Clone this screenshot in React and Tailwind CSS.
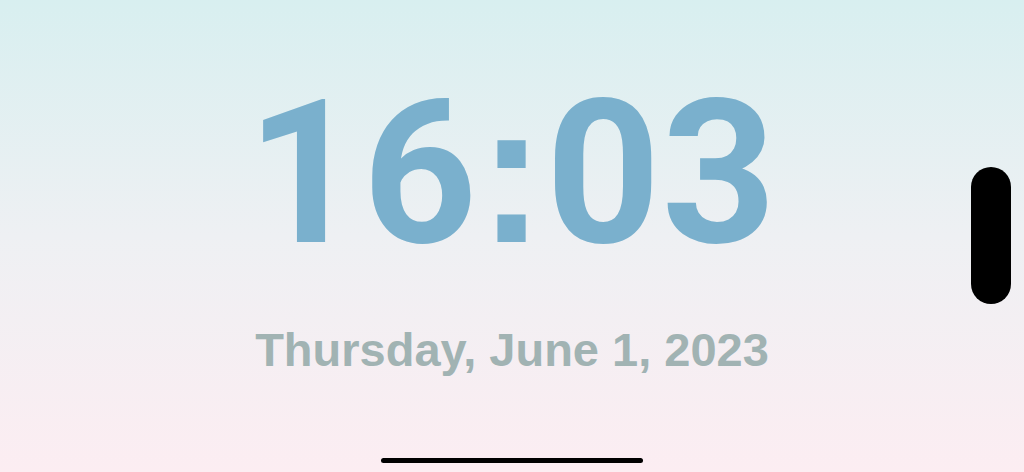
import React from 'react'

export default function App() {
  return (
    <div className="relative flex h-[472px] w-full flex-col items-center overflow-hidden bg-gradient-to-b from-[#d8eff0] via-[#eef0f3] to-[#fcedf2] pt-[73px] font-[family-name:'Liberation_Sans',Arial,sans-serif]">
      <div className="font-[family-name:Roboto,'Liberation_Sans',sans-serif] text-[200px] font-bold leading-none tracking-[1px] text-[#7ab0cd]">
        16<span className="font-[family-name:'Liberation_Sans',Arial,sans-serif]">:</span>03
      </div>
      <div className="mt-[52px] text-[47px] font-bold leading-none text-[#a1b3b3]">Thursday, June 1, 2023</div>

      {/* side pill + home indicator */}
      <div className="absolute right-[13px] top-[167px] h-[137px] w-[40px] rounded-full bg-black" />
      <div className="absolute bottom-[9px] left-[381px] h-[5px] w-[262px] rounded-full bg-black" />
    </div>
  )
}
